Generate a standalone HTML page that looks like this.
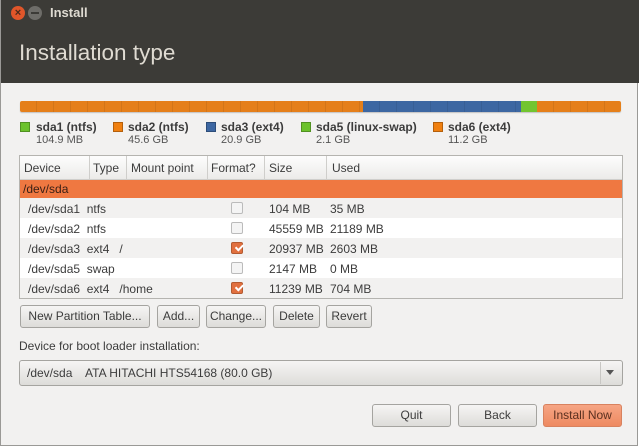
<!DOCTYPE html>
<html><head><style>
*{box-sizing:border-box;margin:0;padding:0}
body{width:640px;height:446px;overflow:hidden;background:#fff;font-family:"Liberation Sans",sans-serif;font-size:12px;color:#3c3c3c;position:relative}
.win{position:absolute;left:0;top:0;width:638px;height:446px;background:#f2f1f0;border:1px solid #9a9996;border-top:none}
.hdr{position:absolute;left:0;top:0;width:638px;height:83px;background:#3c3b37}
.a{position:absolute;white-space:nowrap}
.btn{position:absolute;height:23px;border:1px solid #a5a4a0;border-radius:3px;background:linear-gradient(#f6f5f4,#dddcd9);text-align:center;line-height:21px;font-size:12px;color:#3c3c3c}
.sq{position:absolute;width:10px;height:10px;border:1px solid rgba(0,0,0,.25)}
.sz{position:absolute;white-space:nowrap;top:134px;font-size:11px;color:#555}
.cb{position:absolute;left:230px;width:12px;height:12px;border:1px solid #bbb;border-radius:2px;background:#f4f4f4}
.cb.on{background:#e1703f;border-color:#b35a30}
.cb.on:after{content:"";position:absolute;left:2px;top:0px;width:6px;height:3px;border-left:2px solid #fff;border-bottom:2px solid #fff;transform:rotate(-45deg) translate(0,2px)}
.seg{background-image:repeating-linear-gradient(90deg,transparent 0 16px,rgba(0,0,0,.08) 16px 17px)}
</style></head><body>
<div class="win">
<div class="hdr"></div>
<div class="a" style="left:10px;top:6px;width:14px;height:14px;border-radius:50%;background:#e0562a;color:#4a2a1a;font-size:11px;line-height:14px;text-align:center;font-weight:bold">×</div>
<div class="a" style="left:27px;top:6px;width:14px;height:14px;border-radius:50%;background:#6e6d69"><div style="margin:6px 3px;height:2px;background:#3c3b37"></div></div>
<div class="a" style="left:49px;top:5px;color:#dfdbd2;font-weight:bold;font-size:13px">Install</div>
<div class="a" style="left:18px;top:40px;color:#dfdbd2;font-size:22.5px">Installation type</div>

<div class="a" style="left:19px;top:101px;width:601px;height:11px;border-radius:2px;overflow:hidden;display:flex;box-shadow:0 1px 1px rgba(0,0,0,.2)">
<div class="seg" style="width:343px;background-color:#e57f1a"></div>
<div class="seg" style="width:158px;background-color:#3d67a2"></div>
<div class="seg" style="width:16px;background-color:#72c530"></div>
<div class="seg" style="width:84px;background-color:#e57f1a"></div>
</div>

<div class="sq" style="left:19px;top:122px;background:#6cc22c"></div>
<div class="a" style="left:35px;top:120px;font-weight:bold;font-size:12px">sda1 (ntfs)</div>
<div class="sz" style="left:35px">104.9 MB</div>
<div class="sq" style="left:112px;top:122px;background:#f08010"></div>
<div class="a" style="left:127px;top:120px;font-weight:bold">sda2 (ntfs)</div>
<div class="sz" style="left:127px">45.6 GB</div>
<div class="sq" style="left:205px;top:122px;background:#3d67a2"></div>
<div class="a" style="left:220px;top:120px;font-weight:bold">sda3 (ext4)</div>
<div class="sz" style="left:220px">20.9 GB</div>
<div class="sq" style="left:300px;top:122px;background:#6cc22c"></div>
<div class="a" style="left:315px;top:120px;font-weight:bold">sda5 (linux-swap)</div>
<div class="sz" style="left:315px">2.1 GB</div>
<div class="sq" style="left:432px;top:122px;background:#f08010"></div>
<div class="a" style="left:447px;top:120px;font-weight:bold">sda6 (ext4)</div>
<div class="sz" style="left:447px">11.2 GB</div>

<div class="a" style="left:18px;top:155px;width:604px;height:144px;background:#fff;border:1px solid #b5b4b0"></div>
<div class="a" style="left:19px;top:156px;width:602px;height:24px;background:linear-gradient(#fdfdfd,#ecebe9);border-bottom:1px solid #cfcecb"></div>
<div class="a" style="left:88px;top:156px;width:1px;height:24px;background:#cfcecb"></div>
<div class="a" style="left:125px;top:156px;width:1px;height:24px;background:#cfcecb"></div>
<div class="a" style="left:206px;top:156px;width:1px;height:24px;background:#cfcecb"></div>
<div class="a" style="left:263px;top:156px;width:1px;height:24px;background:#cfcecb"></div>
<div class="a" style="left:325px;top:156px;width:1px;height:24px;background:#cfcecb"></div>
<div class="a" style="left:23px;top:161px">Device</div>
<div class="a" style="left:92px;top:161px">Type</div>
<div class="a" style="left:130px;top:161px">Mount point</div>
<div class="a" style="left:210px;top:161px">Format?</div>
<div class="a" style="left:268px;top:161px">Size</div>
<div class="a" style="left:331px;top:161px">Used</div>

<div class="a" style="left:19px;top:180px;width:602px;height:18px;background:#ef7841"></div>
<div class="a" style="left:22px;top:182px;color:#3a2016">/dev/sda</div>
<div class="a" style="left:19px;top:198px;width:602px;height:20px;background:#f2f1f0"></div>
<div class="a" style="left:19px;top:238px;width:602px;height:20px;background:#f2f1f0"></div>
<div class="a" style="left:19px;top:278px;width:602px;height:20px;background:#f2f1f0"></div>

<div class="a" style="left:27px;top:202px">/dev/sda1&nbsp; ntfs</div>
<div class="cb" style="top:202px"></div><div class="a" style="left:268px;top:202px">104 MB</div><div class="a" style="left:329px;top:202px">35 MB</div>
<div class="a" style="left:27px;top:222px">/dev/sda2&nbsp; ntfs</div>
<div class="cb" style="top:222px"></div><div class="a" style="left:268px;top:222px">45559 MB</div><div class="a" style="left:329px;top:222px">21189 MB</div>
<div class="a" style="left:27px;top:242px">/dev/sda3&nbsp; ext4&nbsp;&nbsp; /</div>
<div class="cb on" style="top:242px"></div><div class="a" style="left:268px;top:242px">20937 MB</div><div class="a" style="left:329px;top:242px">2603 MB</div>
<div class="a" style="left:27px;top:262px">/dev/sda5&nbsp; swap</div>
<div class="cb" style="top:262px"></div><div class="a" style="left:268px;top:262px">2147 MB</div><div class="a" style="left:329px;top:262px">0 MB</div>
<div class="a" style="left:27px;top:282px">/dev/sda6&nbsp; ext4&nbsp;&nbsp; /home</div>
<div class="cb on" style="top:282px"></div><div class="a" style="left:268px;top:282px">11239 MB</div><div class="a" style="left:329px;top:282px">704 MB</div>

<div class="btn" style="left:19px;top:305px;width:130px">New Partition Table...</div>
<div class="btn" style="left:156px;top:305px;width:43px">Add...</div>
<div class="btn" style="left:205px;top:305px;width:60px">Change...</div>
<div class="btn" style="left:272px;top:305px;width:47px">Delete</div>
<div class="btn" style="left:325px;top:305px;width:46px">Revert</div>

<div class="a" style="left:18px;top:339px">Device for boot loader installation:</div>
<div class="btn" style="left:18px;top:360px;width:604px;height:26px;text-align:left;padding-left:7px;line-height:24px">/dev/sda&nbsp;&nbsp;&nbsp; ATA HITACHI HTS54168 (80.0 GB)</div>
<div class="a" style="left:599px;top:362px;width:1px;height:22px;background:#c8c7c4"></div>
<div class="a" style="left:605px;top:370px;width:0;height:0;border-left:4px solid transparent;border-right:4px solid transparent;border-top:5px solid #555"></div>

<div class="btn" style="left:371px;top:404px;width:79px">Quit</div>
<div class="btn" style="left:457px;top:404px;width:79px">Back</div>
<div class="btn" style="left:542px;top:404px;width:79px;background:linear-gradient(#f6a584,#ee8a61);border-color:#d8825f;color:#5a3020">Install Now</div>
</div>
</body></html>
